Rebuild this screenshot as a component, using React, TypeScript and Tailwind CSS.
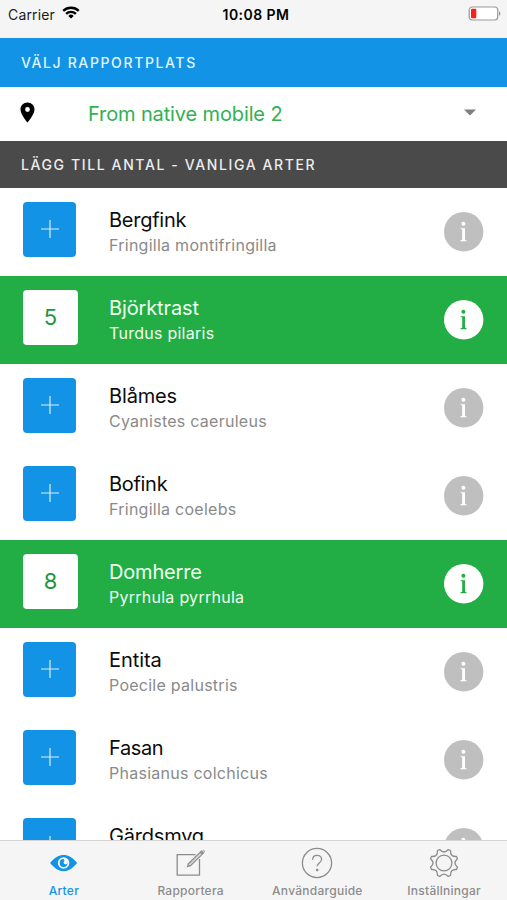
import React from 'react';

type Species = { name: string; latin?: string; count?: number; nameClass: string };

const species: Species[] = [
  { name: 'Bergfink', latin: 'Fringilla montifringilla', nameClass: 'tracking-[-0.25px]' },
  { name: 'Björktrast', latin: 'Turdus pilaris', count: 5, nameClass: 'tracking-[-0.13px]' },
  { name: 'Blåmes', latin: 'Cyanistes caeruleus', nameClass: 'tracking-[-0.15px]' },
  { name: 'Bofink', latin: 'Fringilla coelebs', nameClass: 'tracking-[-0.3px]' },
  { name: 'Domherre', latin: 'Pyrrhula pyrrhula', count: 8, nameClass: 'tracking-[-0.18px]' },
  { name: 'Entita', latin: 'Poecile palustris', nameClass: 'tracking-[-0.05px]' },
  { name: 'Fasan', latin: 'Phasianus colchicus', nameClass: 'tracking-[-0.4px]' },
  { name: 'Gärdsmyg', nameClass: 'tracking-[-0.2px]' },
];

function gearPath(center: number, outer: number, inner: number, teeth: number) {
  const step = 360 / teeth;
  const point = (deg: number, r: number) => {
    const a = (deg * Math.PI) / 180;
    return `${(center + r * Math.cos(a)).toFixed(2)} ${(center + r * Math.sin(a)).toFixed(2)}`;
  };
  let d = '';
  for (let i = 0; i < teeth; i++) {
    const tooth = step / 2 + i * step;
    d += `${i === 0 ? 'M' : 'L'}${point(tooth - 5, outer)}L${point(tooth + 5, outer)}`;
    d += `Q${point(tooth + step / 2, inner)} ${point(tooth + step - 5, outer)}`;
  }
  return `${d}Z`;
}

function StatusBar() {
  return (
    <header className="grid h-[38px] shrink-0 grid-cols-3 bg-[#f5f5f5] pl-2 pr-1.5 text-black">
      <div className="flex h-7 items-center text-[14px] tracking-[0.15px] text-[#1c1c1c]">
        Carrier
        <svg className="-mt-[3px] ml-[7px]" width="18" height="13" viewBox="0 0 18 13" fill="none" stroke="black" strokeWidth="2.3">
          <path d="M1.2 4.9a11.2 11.2 0 0 1 15.6 0M4.1 7.9a7 7 0 0 1 9.8 0" />
          <path d="M6.3 9.9a3.9 3.9 0 0 1 5.4 0L9 12.6z" fill="black" stroke="none" />
        </svg>
      </div>
      <div className="flex h-7 items-center justify-center pl-[3px] text-[14px] font-semibold tracking-[0.45px]">10:08 PM</div>
      <div className="flex h-[26px] items-center justify-end">
        <svg width="33" height="15" viewBox="0 0 33 15">
          <rect x="1.2" y="1" width="28.5" height="13" rx="3" fill="white" stroke="#999" strokeWidth="1.2" />
          <rect x="3" y="2.8" width="5.3" height="9.4" rx="1" fill="#fc1d1d" />
          <path d="M31 5.2c1.8.6 1.8 4 0 4.6z" fill="#999" />
        </svg>
      </div>
    </header>
  );
}

function InfoButton({ active }: { active: boolean }) {
  return (
    <svg className="mt-6 shrink-0" width="40" height="40" viewBox="0 0 40 40">
      <circle cx="19.7" cy="19.8" r="19.7" fill={active ? '#fff' : '#bfbfbf'} />
      <g fill={active ? '#22ae45' : '#fff'}>
        <circle cx="19.4" cy="11.8" r="2" />
        <path d="M16.6 16.2h4.4v11.6l1.5.5v.9h-6v-.9l1.7-.5v-10.200l-1.600-.5z" />
      </g>
    </svg>
  );
}

function SpeciesRow({ item }: { item: Species }) {
  const active = item.count !== undefined;
  return (
    <li className={`flex h-[88px] shrink-0 px-[23px] ${active ? 'bg-[#22ae45] text-[#effff0]' : 'bg-white text-[#0c0c0c]'}`}>
      <div className="w-[86px] shrink-0 pt-[14px]">
        {active ? (
          <div className="flex h-[55px] w-[55px] items-center justify-center rounded bg-white text-[22px] text-[#22963b]">{item.count}</div>
        ) : (
          <div className="flex h-[54.5px] w-[53px] items-center justify-center rounded bg-[#1293e5]">
            <svg width="18" height="18" viewBox="0 0 18 18" stroke="#d8effc" strokeWidth="1.2">
              <path d="M0 9h18M9 0v18" />
            </svg>
          </div>
        )}
      </div>
      <div className="min-w-0 flex-1 whitespace-nowrap pt-5">
        <div className={`text-[20px] leading-6 ${item.nameClass}`}>{item.name}</div>
        {item.latin && (
          <div className={`mt-px text-[16px] leading-6 tracking-[0.26px] ${active ? 'text-[#effff0]' : 'text-[#8a8a8a]'}`}>{item.latin}</div>
        )}
      </div>
      <InfoButton active={active} />
    </li>
  );
}

function TabBar() {
  const tab = 'flex flex-col items-center pt-[6px] text-[12px] font-medium tracking-[0.26px]';
  return (
    <nav className="grid h-[60px] shrink-0 grid-cols-4 border-t border-[#d2d2d2] bg-[#f5f5f5] text-[#8c8c8c]">
      <div className={`${tab} text-[#1293e5]`}>
        <svg width="32" height="32" viewBox="0 0 32 32">
          <path d="M3.100 16C7.500 10.500 12 8 16.600 8S25.700 10.500 30.100 16C25.700 21.500 21.200 24.200 16.600 24.200S7.500 21.500 3.100 16z" fill="#1293e5" />
          <circle cx="16.600" cy="16" r="5.800" fill="#f5f5f5" />
          <path d="M16.600 12.100a3.900 3.900 0 1 0 3.900 3.900 2 2 0 0 1-3.900-.7 2 2 0 0 1 .9-1.600z" fill="#1293e5" />
        </svg>
        <span className="ml-px mt-1 leading-4">Arter</span>
      </div>
      <div className={tab}>
        <svg width="32" height="32" viewBox="0 0 32 32" fill="none" stroke="#8c8c8c" strokeWidth="1.3">
          <path d="M21.500 7.700H3.200v20.500h22.300V12" />
          <path d="m14.400 16.700 13-12.600 2 2-13 12.600-2.800.9zM26.300 5.200l2 2" />
          <path d="m15.300 17.800 13-12.700" strokeWidth="1" opacity=".5" />
          <path d="m28.500 4.100 1-1 1.300 1.200-1 1.100z" strokeWidth=".8" />
        </svg>
        <span className="ml-px mt-1 leading-4">Rapportera</span>
      </div>
      <div className={tab}>
        <svg width="32" height="32" viewBox="0 0 32 32" fill="none" stroke="#8c8c8c" strokeWidth="1.3">
          <circle cx="16" cy="16" r="14.600" />
          <path d="M11.600 12.800c0-6 9-5.800 9-.6 0 3.800-4.400 3.700-4.400 7.100" />
          <circle cx="16.200" cy="23" r=".7" fill="#8c8c8c" />
        </svg>
        <span className="ml-px mt-1 leading-4">Användarguide</span>
      </div>
      <div className={tab}>
        <svg width="32" height="32" viewBox="0 0 32 32" fill="none" stroke="#8c8c8c" strokeWidth="1.3" strokeLinejoin="round">
          <circle cx="16" cy="16" r="7.900" />
          <path d={gearPath(16, 14.1, 8.6, 8)} />
        </svg>
        <span className="ml-px mt-1 leading-4">Inställningar</span>
      </div>
    </nav>
  );
}

export default function App() {
  return (
    <div className="flex h-[900px] w-[507px] flex-col overflow-hidden bg-white font-['Inter','Liberation_Sans',sans-serif]">
      <StatusBar />
      <div className="flex h-[49px] shrink-0 items-center bg-[#1293e5] pl-[21px] text-[14px] font-medium tracking-[1.62px] text-[#e2f5ff]">VÄLJ RAPPORTPLATS</div>
      <div className="flex h-[54px] shrink-0 items-center pl-[20px] pr-[31px]">
        <svg className="-mt-1" width="15" height="21" viewBox="0 0 15 21">
          <path fillRule="evenodd" d="M7.500.5C3.500.5.500 3.500.500 7.500c0 5 7 13 7 13s7-8 7-13c0-4-3-7-7-7zm0 4.600a2.400 2.400 0 1 1 0 4.800 2.400 2.400 0 0 1 0-4.800z" />
        </svg>
        <span className="ml-[53px] flex-1 text-[20px] tracking-[-0.13px] text-[#32b052]">From native mobile 2</span>
        <svg className="-mt-1" width="12" height="7" viewBox="0 0 12 7"><path d="M0 .5h12l-6 6z" fill="#7e7e7e" /></svg>
      </div>
      <div className="flex h-[47px] shrink-0 items-center bg-[#4a4a4a] pl-[21px] text-[14px] font-medium tracking-[1.61px] text-[#ededed]">LÄGG TILL ANTAL - VANLIGA ARTER</div>
      <ul className="flex min-h-0 flex-1 flex-col overflow-hidden">
        {species.map((item) => <SpeciesRow key={item.name} item={item} />)}
      </ul>
      <TabBar />
    </div>
  );
}
